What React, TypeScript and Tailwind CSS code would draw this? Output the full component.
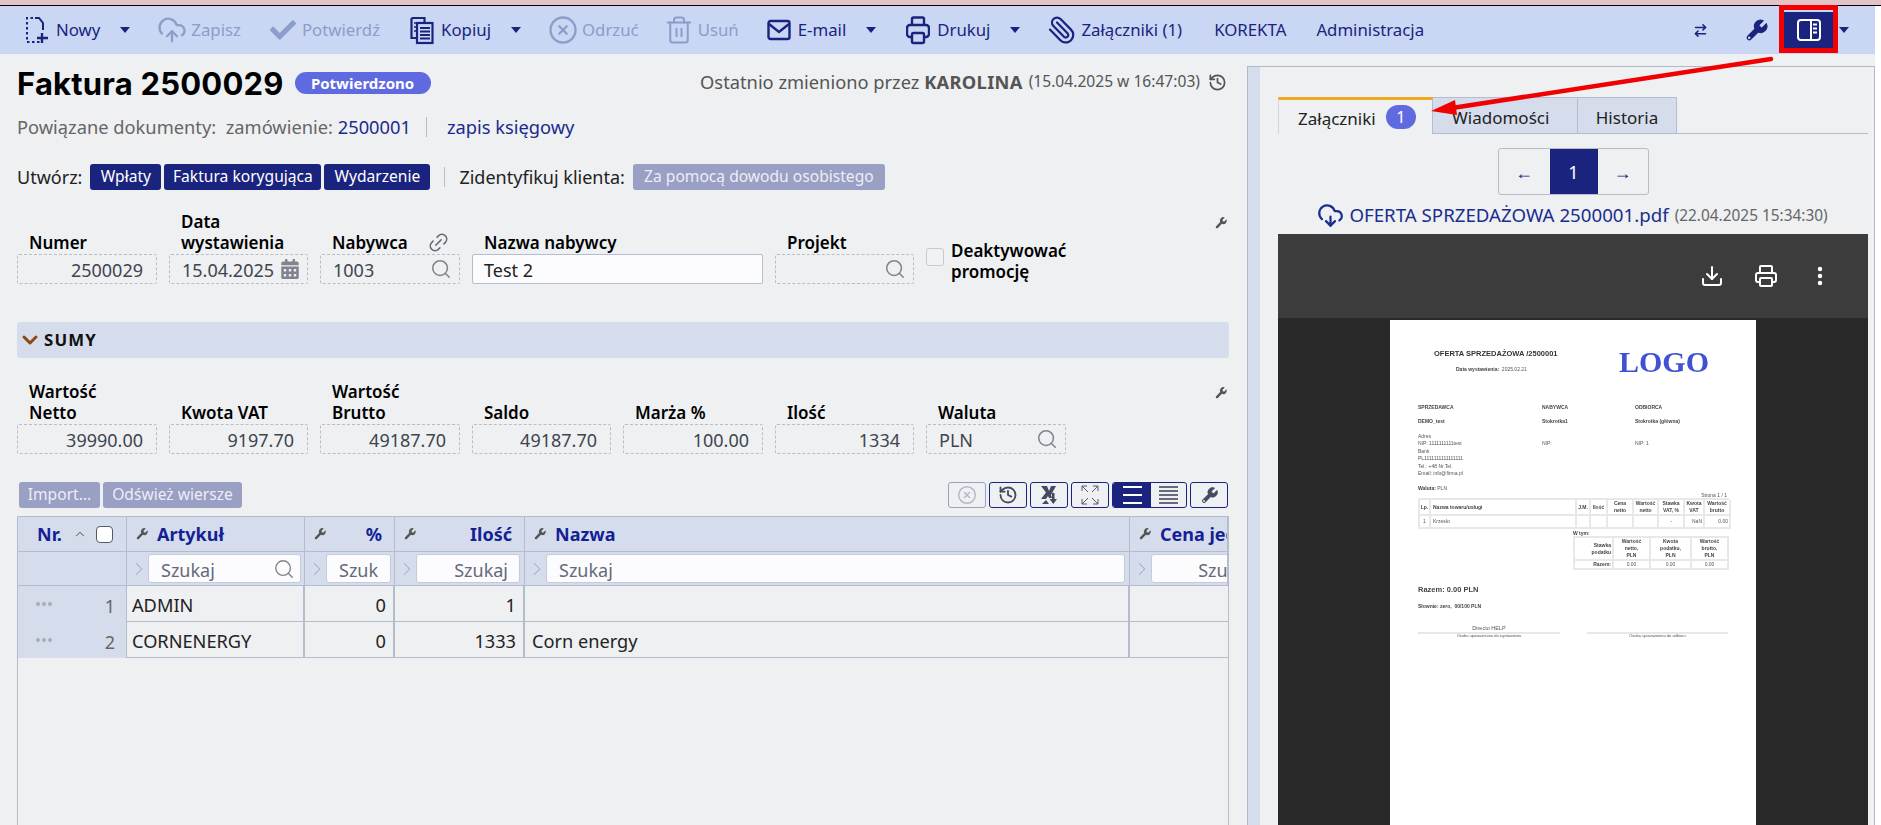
import React from "react";
import {
    CloudUpload,
    CircleX,
    Trash2,
    Paperclip,
    ArrowRightLeft,
    History,
    Search,
    Link2,
    ChevronDown,
    ChevronRight,
    ChevronUp,
    CloudDownload,
    Download,
    Printer,
    EllipsisVertical,
} from "lucide-react";
import { FaCalendarAlt, FaCheck } from "react-icons/fa";

const navy = "#1a237e";

function Caret() {
    return (
        <svg width="10" height="6" viewBox="0 0 10 6" className="ml-[20px] shrink-0">
            <polygon points="0,0 10,0 5,6" fill={navy} />
        </svg>
    );
}

function WrenchIcon({ size, className, hole }: { size: number; className?: string; hole?: string }) {
    return (
        <svg width={size} height={size} viewBox="0 0 24 24" fill="currentColor" stroke="currentColor" strokeWidth={size > 15 ? 1 : 0} className={className}>
            <path d="M14.700 6.300a1 1 0 0 0 0 1.400l1.600 1.600a1 1 0 0 0 1.400 0l3.770-3.770a6 6 0 0 1-7.940 7.940l-6.910 6.910a2.120 2.120 0 0 1-3-3l6.910-6.910a6 6 0 0 1 7.940-7.940l-3.760 3.760z" />
            {hole && <circle cx="5" cy="19" r="1.200" fill={hole} stroke="none" />}
        </svg>
    );
}

function NewIcon() {
    return (
        <svg width="24" height="28" viewBox="0 0 24 28" fill="none" stroke={navy} strokeWidth="2">
            <path d="M10 2h4l4 5v7" />
            <path d="M8 2H2v24h15" strokeDasharray="2.5 2.5" />
            <path d="M17 17v10M12 22h11" strokeWidth="2.4" />
        </svg>
    );
}

function CopyIcon() {
    return (
        <svg width="24" height="29" viewBox="0 0 24 29" fill="none" stroke={navy} strokeWidth="2.2">
            <path d="M1.500 2h13v4" />
            <path d="M1.500 2v20h5" />
            <rect x="7" y="7" width="15.500" height="20" fill="#c9d7f4" />
            <path d="M10 12h10M10 15.500h10M10 19h10M10 22.500h10" strokeWidth="1.8" />
            <path d="M4 7h3M4 11h3M4 15h3" strokeWidth="1.6" />
        </svg>
    );
}

function MailIcon() {
    return (
        <svg width="24" height="24" viewBox="0 0 24 24" fill="none" stroke={navy} strokeWidth="2.4">
            <rect x="1.500" y="3" width="21" height="18" rx="2" />
            <path d="M2 6l10 8 10-8" />
        </svg>
    );
}

function PrinterIcon() {
    return (
        <svg width="24" height="29" viewBox="0 0 24 29" fill="none" stroke={navy} strokeWidth="2.4">
            <path d="M6 9V3a1.500 1.500 0 0 1 1.500-1.500h9A1.500 1.500 0 0 1 18 3v6" />
            <path d="M6 21H4a3 3 0 0 1-3-3v-6a3 3 0 0 1 3-3h16a3 3 0 0 1 3 3v6a3 3 0 0 1-3 3h-2" />
            <rect x="6" y="17" width="12" height="10" rx="1.500" />
        </svg>
    );
}

function ToolItem({ icon, label, disabled, className }: { icon: React.ReactNode; label: string; disabled?: boolean; className?: string }) {
    return (
        <div className={`flex items-center gap-[7px] shrink-0 ${disabled ? "text-[#8d9cc9]" : "text-[#1a237e]"} ${className ?? ""}`}>
            <div className="flex w-[24px] justify-center [&>svg]:shrink-0">{icon}</div>
            <span>{label}</span>
        </div>
    );
}

function Toolbar() {
    return (
        <div className="flex h-[48px] w-[1875px] items-center bg-[#c9d7f4] pl-[25px] text-[16.800px] leading-none text-[#1a237e]">
            <div className="flex items-center gap-[30px]">
                <div className="flex items-center">
                    <ToolItem icon={<NewIcon />} label="Nowy" />
                    <Caret />
                </div>
                <ToolItem disabled icon={<CloudUpload size={30} strokeWidth={1.8} />} label="Zapisz" />
                <ToolItem disabled icon={<FaCheck size={26} />} label="Potwierdź" />
                <div className="flex items-center">
                    <ToolItem icon={<CopyIcon />} label="Kopiuj" />
                    <Caret />
                </div>
                <ToolItem disabled icon={<CircleX size={30} strokeWidth={1.8} />} label="Odrzuć" />
                <ToolItem disabled className="-ml-[2px] -mr-[2px]" icon={<Trash2 size={30} strokeWidth={1.6} />} label="Usuń" />
                <div className="flex items-center">
                    <ToolItem icon={<MailIcon />} label="E-mail" />
                    <Caret />
                </div>
                <div className="flex items-center">
                    <ToolItem icon={<PrinterIcon />} label="Drukuj" />
                    <Caret />
                </div>
                <ToolItem icon={<Paperclip size={30} strokeWidth={1.8} className="-scale-x-100" />} label="Załączniki (1)" />
                <span className="ml-[2px]">KOREKTA</span>
                <span>Administracja</span>
            </div>
            <div className="ml-auto flex items-center">
                <ArrowRightLeft size={15} strokeWidth={2.4} className="mr-[36px]" />
                <WrenchIcon size={25} hole="#c9d7f4" className="mr-[10px]" />
                <div className="h-[48px] w-[59px] -translate-y-px border-[5px] border-[#f00000] bg-[#c9d7f4]">
                    <div className="flex h-full items-center justify-center border-t-2 border-[#c9d7f4] bg-[#1a237e]">
                        <svg width="24" height="24" viewBox="0 0 24 24" fill="none" stroke="#fff" strokeWidth="2">
                            <rect x="1" y="2" width="22" height="20" rx="3" />
                            <path d="M14 2v20" />
                            <path d="M16 6.500h4M16 10.500h4M16 14.500h4" strokeWidth="2" />
                        </svg>
                    </div>
                </div>
                <svg width="10" height="6" viewBox="0 0 10 6" className="ml-[1px] mr-[26px]">
                    <polygon points="0,0 10,0 5,6" fill={navy} />
                </svg>
            </div>
        </div>
    );
}

function Field({ w, value, align, icon }: { w: string; value?: string; align?: "right"; icon?: React.ReactNode }) {
    return (
        <div
            className={`flex h-[30px] shrink-0 items-center rounded-[2px] border border-dashed border-[#b9bdc9] pt-[2px] text-[18px] leading-none text-[#3f4450] ${w} ${
                align === "right" ? "justify-end pr-[13px]" : "pl-[12px]"
            }`}
        >
            <span>{value}</span>
            {icon && <span className="-mt-[2px] ml-auto mr-[7px] flex">{icon}</span>}
        </div>
    );
}

function Labeled({ label, w, extra, children }: { label: React.ReactNode; w: string; extra?: React.ReactNode; children: React.ReactNode }) {
    return (
        <div className={`flex shrink-0 flex-col ${w}`}>
            <div className="flex items-end justify-between pl-[12px] pr-[10px] pb-[1px] text-[17px] font-semibold leading-[21px] text-black">
                <span>{label}</span>
                {extra}
            </div>
            {children}
        </div>
    );
}

const lens = <Search size={22} strokeWidth={1.7} className="text-[#80848f]" />;

function FormRow() {
    return (
        <div className="mt-[21px] flex h-[73px] items-end gap-[12px]">
            <Labeled label="Numer" w="w-[140px]">
                <Field w="w-[140px]" value="2500029" align="right" />
            </Labeled>
            <Labeled label={<>Data<br />wystawienia</>} w="w-[139px]">
                <Field w="w-[139px]" value="15.04.2025" icon={<FaCalendarAlt size={20} className="text-[#80848f]" />} />
            </Labeled>
            <Labeled label="Nabywca" w="w-[140px]" extra={<Link2 size={23} strokeWidth={1.7} className="-mb-[1px] -rotate-45 text-[#666a75]" />}>
                <Field w="w-[140px]" value="1003" icon={lens} />
            </Labeled>
            <Labeled label="Nazwa nabywcy" w="w-[291px]">
                <div className="flex h-[30px] items-center rounded-[2px] border border-[#b4bccd] bg-[#fcfcff] pl-[11px] pt-[2px] text-[18px] leading-none text-[#222]">
                    Test 2
                </div>
            </Labeled>
            <Labeled label="Projekt" w="w-[139px]">
                <Field w="w-[139px]" icon={lens} />
            </Labeled>
            <div className="mb-[2px] flex items-center gap-[7px]">
                <div className="-mt-[8px] h-[18px] w-[18px] rounded-[3px] border border-[#c8cad0] bg-[#f1f2f4]" />
                <div className="text-[17px] font-semibold leading-[21px] text-black">
                    Deaktywować<br />promocję
                </div>
            </div>
            <WrenchIcon size={14} className="mb-[54px] ml-auto mr-[1px] self-end text-[#555]" />
        </div>
    );
}

function SumsRow() {
    return (
        <div className="mt-[22px] flex h-[74px] items-end gap-[12px]">
            <Labeled label={<>Wartość<br />Netto</>} w="w-[140px]">
                <Field w="w-[140px]" value="39990.00" align="right" />
            </Labeled>
            <Labeled label="Kwota VAT" w="w-[139px]">
                <Field w="w-[139px]" value="9197.70" align="right" />
            </Labeled>
            <Labeled label={<>Wartość<br />Brutto</>} w="w-[140px]">
                <Field w="w-[140px]" value="49187.70" align="right" />
            </Labeled>
            <Labeled label="Saldo" w="w-[139px]">
                <Field w="w-[139px]" value="49187.70" align="right" />
            </Labeled>
            <Labeled label="Marża %" w="w-[140px]">
                <Field w="w-[140px]" value="100.00" align="right" />
            </Labeled>
            <Labeled label="Ilość" w="w-[139px]">
                <Field w="w-[139px]" value="1334" align="right" />
            </Labeled>
            <Labeled label="Waluta" w="w-[140px]">
                <Field w="w-[140px]" value="PLN" icon={lens} />
            </Labeled>
            <WrenchIcon size={14} className="mb-[54px] ml-auto mr-[1px] text-[#555]" />
        </div>
    );
}

function GridButton({ children, className }: { children: React.ReactNode; className?: string }) {
    return (
        <div className={`flex h-[26px] w-[38px] items-center justify-center rounded-[3px] border ${className ?? "border-[#1a237e]"}`}>
            {children}
        </div>
    );
}

function GridActions() {
    return (
        <div className="mt-[28px] flex h-[26px] items-center gap-[3px] pr-[1px]">
            <div className="ml-[2px] flex h-[26px] w-[81px] items-center justify-center rounded-[3px] bg-[#9a9fc4] text-[15.600px] text-[#eceef6]">Import...</div>
            <div className="flex h-[26px] w-[139px] items-center justify-center rounded-[3px] bg-[#9a9fc4] text-[15.600px] text-[#eceef6]">Odśwież wiersze</div>
            <div className="ml-auto flex items-center gap-[3px]">
                <GridButton className="border-[#9a9fc4]">
                    <CircleX size={20} strokeWidth={1.8} className="text-[#b4b8c8]" />
                </GridButton>
                <GridButton>
                    <History size={20} strokeWidth={2.2} className="text-[#444a60]" />
                </GridButton>
                <GridButton>
                    <svg width="20" height="20" viewBox="0 0 20 20" fill="#444a60">
                        <path d="M2 1h6l2 5 2-5h5l-5 9 1 3h-3l-1-2-2 3H2l5-6.500z" />
                        <path d="M13 8h2.500v6h2.500l-3.700 5-3.800-5h2.500z" />
                        <path d="M3 19l4-4 3 4z" />
                    </svg>
                </GridButton>
                <GridButton>
                    <svg width="18" height="20" viewBox="0 0 18 20" fill="none" stroke="#555a70" strokeWidth="1">
                        <path d="M1 1h5M1 1v5M1 1l6 6M17 1h-5M17 1v5M17 1l-6 6M1 19h5M1 19v-5M1 19l6-6M17 19h-5M17 19v-5M17 19l-6-6" />
                    </svg>
                </GridButton>
                <div className="flex h-[26px] w-[75px] overflow-hidden rounded-[3px] border border-[#1a237e]">
                    <div className="flex w-[38px] flex-col items-center justify-center gap-[6px] bg-[#1a237e]">
                        <div className="h-[2px] w-[19px] bg-white" />
                        <div className="h-[2px] w-[19px] bg-white" />
                        <div className="h-[2px] w-[19px] bg-white" />
                    </div>
                    <div className="flex flex-1 flex-col items-center justify-center gap-[2.500px]">
                        <div className="h-[1.500px] w-[19px] bg-[#666a7a]" />
                        <div className="h-[1.500px] w-[19px] bg-[#666a7a]" />
                        <div className="h-[1.500px] w-[19px] bg-[#666a7a]" />
                        <div className="h-[1.500px] w-[19px] bg-[#666a7a]" />
                        <div className="h-[1.500px] w-[19px] bg-[#666a7a]" />
                    </div>
                </div>
                <GridButton>
                    <WrenchIcon size={19} hole="#eef0f2" className="text-[#444a60]" />
                </GridButton>
            </div>
        </div>
    );
}

function HeadCell({ label, right }: { label: string; right?: boolean }) {
    return (
        <div className="flex h-[35px] items-center overflow-hidden whitespace-nowrap border-r border-b border-[#b4bccd] bg-[#d5dcec] pl-[8px] pr-[12px] last:border-r-0">
            <WrenchIcon size={14} className="shrink-0 text-[#555]" />
            <span className={`pt-[1px] text-[18px] font-bold text-[#141f96] ${right ? "ml-auto" : "ml-[8px]"}`}>{label}</span>
        </div>
    );
}

function FilterCell({ inputClass, placeholder, icon }: { inputClass: string; placeholder: string; icon?: boolean }) {
    return (
        <div className="flex h-[34px] items-center overflow-hidden border-r border-b border-[#b4bccd] bg-[#d5dcec] pl-[5px] last:border-r-0">
            <div className="flex w-[13px] shrink-0 justify-center">
                <ChevronRight size={22} strokeWidth={1.100} className="shrink-0 text-[#a4aabb]" />
            </div>
            <div className={`ml-[3px] flex h-[29px] shrink-0 items-center rounded-[3px] border border-[#c5cbdb] bg-[#fcfcff] pt-[2px] text-[18px] leading-none text-[#646a78] ${inputClass}`}>
                <span>{placeholder}</span>
                {icon && <Search size={22} strokeWidth={1.5} className="-mt-[2px] ml-auto mr-[5px] text-[#80848f]" />}
            </div>
        </div>
    );
}

function DataRow({ nr, artykul, ilosc, nazwa }: { nr: string; artykul: string; ilosc: string; nazwa: string }) {
    const cell = "flex h-[36px] items-center border-r-2 border-b border-[#b4bccd] pt-[3px] text-[18.200px] leading-none text-[#222]";
    return (
        <>
            <div className="flex h-[36px] items-center justify-between border-r border-[#b4bccd] bg-[#d5dcec] pl-[18px] pr-[11px] pt-[3px] text-[18px] leading-none text-[#666]">
                <div className="-mt-[3px] flex gap-[2px]">
                    <div className="h-[4px] w-[4px] rounded-full bg-[#a8acb8]" />
                    <div className="h-[4px] w-[4px] rounded-full bg-[#a8acb8]" />
                    <div className="h-[4px] w-[4px] rounded-full bg-[#a8acb8]" />
                </div>
                {nr}
            </div>
            <div className={`${cell} pl-[5px]`}>{artykul}</div>
            <div className={`${cell} justify-end pr-[7px]`}>0</div>
            <div className={`${cell} justify-end pr-[7px]`}>{ilosc}</div>
            <div className={`${cell} pl-[7px]`}>{nazwa}</div>
            <div className="h-[36px] border-b border-[#b4bccd]" />
        </>
    );
}

function RowsTable() {
    return (
        <div className="mt-[8px] h-[320px] w-[1212px] overflow-hidden border border-[#b4bccd]">
            <div className="grid grid-cols-[109px_178px_90px_130px_605px_98px]">
                <div className="flex h-[35px] items-center border-r border-b border-[#b4bccd] bg-[#d5dcec] pl-[19px] text-[18px] font-bold text-[#141f96]">
                    Nr.
                    <ChevronUp size={14} strokeWidth={1.800} className="ml-[11px] text-[#666]" />
                    <div className="ml-[9px] h-[17px] w-[17px] rounded-[4px] border border-[#555a6a] bg-white" />
                </div>
                <HeadCell label="Artykuł" />
                <HeadCell label="%" right />
                <HeadCell label="Ilość" right />
                <HeadCell label="Nazwa" />
                <HeadCell label="Cena jednostkowa" />

                <div className="h-[34px] border-r border-b border-[#b4bccd] bg-[#d5dcec]" />
                <FilterCell inputClass="w-[153px] pl-[12px]" placeholder="Szukaj" icon />
                <FilterCell inputClass="w-[65px] pl-[12px] overflow-hidden" placeholder="Szuk" />
                <FilterCell inputClass="w-[104px] justify-end pr-[11px]" placeholder="Szukaj" />
                <FilterCell inputClass="w-[579px] pl-[12px]" placeholder="Szukaj" />
                <FilterCell inputClass="w-[110px] justify-end pr-[8px]" placeholder="Szukaj" />

                <DataRow nr="1" artykul="ADMIN" ilosc="1" nazwa="" />
                <DataRow nr="2" artykul="CORNENERGY" ilosc="1333" nazwa="Corn energy" />
            </div>
        </div>
    );
}

function PdfPage() {
    const thin = "border-r-2 border-b-2 border-[#e8e8e8] flex items-center justify-center text-center";
    return (
        <div className="h-[560px] w-[366px] shrink-0 bg-white px-[28px] font-['Liberation_Sans',sans-serif] text-[5px] leading-[7px] text-[#555]">
            <div className="flex h-[84px] blur-[0.25px]">
                <div className="w-[201px] pl-[16px] pt-[30px]">
                    <div className="text-[7.500px] font-bold leading-[8px] text-[#333]">OFERTA SPRZEDAŻOWA /2500001</div>
                    <div className="mt-[8px] pl-[22px]">
                        <b className="text-[#444]">Data wystawienia:</b>&nbsp; 2025.02.21
                    </div>
                </div>
                <div className="pt-[27px] font-['Liberation_Serif',serif] text-[30px] font-bold leading-[30px] text-[#3f51d4]">LOGO</div>
            </div>
            <div className="blur-[0.25px]">
                <div className="grid grid-cols-[124px_93px_1fr]">
                    <div>
                        <b className="text-[#444]">SPRZEDAWCA</b>
                        <div className="mt-[7px] font-bold text-[#444]">DEMO_test</div>
                        <div className="mt-[8px]">Adres</div>
                        <div>NIP: 1111111111test</div>
                        <div className="mt-[1px]">Bank</div>
                        <div>PL1111111111111111</div>
                        <div className="mt-[1px]">Tel.: +48 Nr.Tel.</div>
                        <div>Email: info@firma.pl</div>
                    </div>
                    <div>
                        <b className="text-[#444]">NABYWCA</b>
                        <div className="mt-[7px] font-bold text-[#444]">Stokrotka1</div>
                        <div className="mt-[15px]">NIP:</div>
                    </div>
                    <div>
                        <b className="text-[#444]">ODBIORCA</b>
                        <div className="mt-[7px] font-bold text-[#444]">Stokrotka (główna)</div>
                        <div className="mt-[15px]">NIP: 1</div>
                    </div>
                </div>
                <div className="mt-[8px]">
                    <b className="text-[#444]">Waluta:</b> PLN
                </div>
                <div className="pr-[1px] text-right">Strona 1 / 1</div>
                <div className="mt-[-1px] grid w-[311px] grid-cols-[11px_146px_14px_17px_26px_25px_26px_20px_26px] border-t-2 border-l-2 border-[#e8e8e8] font-bold text-[#444]">
                    <div className={`${thin} h-[16px]`}>Lp.</div>
                    <div className={`${thin} justify-start pl-[2px]`}>Nazwa towaru/usługi</div>
                    <div className={thin}>J.M.</div>
                    <div className={thin}>Ilość</div>
                    <div className={thin}>Cena netto</div>
                    <div className={thin}>Wartość netto</div>
                    <div className={thin}>Stawka VAT, %</div>
                    <div className={thin}>Kwota VAT</div>
                    <div className={thin}>Wartość brutto</div>
                    <div className={`${thin} h-[13px] font-normal text-[#555]`}>1</div>
                    <div className={`${thin} justify-start pl-[2px] font-normal text-[#555]`}>Krzesło</div>
                    <div className={thin} />
                    <div className={thin} />
                    <div className={thin} />
                    <div className={thin} />
                    <div className={`${thin} font-normal text-[#555]`}>-</div>
                    <div className={`${thin} justify-end pr-[1px] font-normal text-[#555]`}>NaN</div>
                    <div className={`${thin} justify-end pr-[1px] font-normal text-[#555]`}>0.00</div>
                </div>
                <div className="ml-[155px] mt-[1px] font-bold text-[#444]">W tym:</div>
                <div className="ml-[155px] mt-[-1px] grid w-[156px] grid-cols-[39px_37px_41px_37px] border-t-2 border-l-2 border-[#e8e8e8] font-bold text-[#444]">
                    <div className={`${thin} h-[23px] justify-end pr-[1px] text-right`}>Stawka podatku</div>
                    <div className={thin}>Wartość<br />netto,<br />PLN</div>
                    <div className={thin}>Kwota<br />podatku,<br />PLN</div>
                    <div className={thin}>Wartość<br />brutto,<br />PLN</div>
                    <div className={`${thin} h-[9px] justify-end pr-[1px]`}>Razem:</div>
                    <div className={`${thin} font-normal text-[#555]`}>0.00</div>
                    <div className={`${thin} font-normal text-[#555]`}>0.00</div>
                    <div className={`${thin} font-normal text-[#555]`}>0.00</div>
                </div>
                <div className="mt-[16px] text-[7.500px] font-bold leading-[8px] text-[#444]">Razem: 0.00 PLN</div>
                <div className="mt-[9px] font-bold text-[#444]">Słownie: zero,&nbsp; 00/100 PLN</div>
                <div className="mt-[15px] flex justify-between">
                    <div className="w-[142px] text-center">
                        <div className="border-b-2 border-[#e8e8e8] text-[5.500px] leading-[7px]">Directo HELP</div>
                        <div className="text-[4px] leading-[4px]">Osoba upoważniona do wystawienia</div>
                    </div>
                    <div className="w-[141px] text-center">
                        <div className="h-[9px] border-b-2 border-[#e8e8e8]" />
                        <div className="text-[4px] leading-[4px]">Osoba upoważniona do odbioru</div>
                    </div>
                </div>
            </div>
        </div>
    );
}

function SidePanel() {
    return (
        <div className="mt-[12px] flex h-[759px] w-[628px] overflow-hidden border-t border-r border-l border-[#b0b8cc]">
            <div className="w-[12px] shrink-0 bg-[#d5dcec]" />
            <div className="min-w-0 flex-1 pl-[18px] pr-[6px] pt-[30px]">
                <div className="flex h-[37px] border-b border-[#b4bccd] text-[17px] leading-none">
                    <div className="flex h-[37px] w-[155px] items-center border-t-[3px] border-r border-l border-[#f0a820] border-r-[#b4bccd] border-l-[#d0d4de] bg-[#eef0f2] pl-[19px] text-[#222]">
                        <span className="pt-[2px]">Załączniki</span>
                        <span className="ml-[10px] flex h-[24px] w-[30px] items-center justify-center rounded-full bg-[#5f6ae0] text-[16px] text-white">1</span>
                    </div>
                    <div className="flex w-[145px] items-center border-t border-r border-[#b4bccd] bg-[#d5dcec] pl-[19px] pt-[3px] text-[#222]">Wiadomości</div>
                    <div className="flex w-[99px] items-center justify-center border-t border-r border-[#b4bccd] bg-[#d5dcec] pt-[3px] text-[#222]">Historia</div>
                </div>
                <div className="mt-[14px] flex justify-center">
                    <div className="flex h-[47px] w-[151px] overflow-hidden rounded-[3px] border border-[#b4bccd] text-[18px] leading-none text-[#1a237e]">
                        <div className="flex w-[51px] items-center justify-center">←</div>
                        <div className="flex w-[48px] items-center justify-center bg-[#1a237e] text-white">1</div>
                        <div className="flex flex-1 items-center justify-center">→</div>
                    </div>
                </div>
                <div className="mt-[8px] flex h-[31px] items-center justify-center pb-[6px] pr-[1px] text-[18.700px] leading-none text-[#1b2e8e]">
                    <CloudDownload size={27} strokeWidth={2} className="mr-[5px]" />
                    OFERTA SPRZEDAŻOWA 2500001.pdf
                    <span className="ml-[6px] pt-[1px] text-[15.400px] text-[#666]">(22.04.2025 15:34:30)</span>
                </div>
                <div className="h-[591px] w-[590px] bg-[#282828]">
                    <div className="flex h-[84px] items-center justify-end gap-[30px] bg-[#3c3c3c] pr-[36px] text-white">
                        <Download size={24} strokeWidth={2} />
                        <Printer size={24} strokeWidth={2} />
                        <EllipsisVertical size={24} strokeWidth={2.500} />
                    </div>
                    <div className="flex h-[507px] justify-start overflow-hidden pl-[112px] pt-[2px]">
                        <PdfPage />
                    </div>
                </div>
            </div>
        </div>
    );
}

export default function App() {
    return (
        <div className="relative h-[825px] w-[1881px] overflow-hidden bg-white font-['Noto_Sans',sans-serif]">
            <div className="h-[6px] w-full border-b border-black bg-[#e3c3c8]" />
            <Toolbar />
            <div className="flex h-[771px] w-[1875px] bg-[#eef0f2]">
                <div className="w-[1247px] shrink-0 pl-[17px] pr-[18px]">
                    <div className="mt-[12px] flex h-[34px] items-center">
                        <h1 className="pt-[1px] font-['Inter',sans-serif] text-[31px] font-bold leading-none tracking-[0.2px] text-black">Faktura 2500029</h1>
                        <span className="ml-[11px] flex h-[22px] w-[136px] items-center justify-center rounded-full bg-[#5f6ae0] text-[15px] font-bold leading-none text-white">
                            Potwierdzono
                        </span>
                        <div className="ml-auto flex -translate-y-px items-center pr-[2px] text-[18.300px] leading-none text-[#555]">
                            Ostatnio zmieniono przez&nbsp;<b className="font-bold tracking-[0.3px]">KAROLINA</b>
                            <span className="ml-[6px] text-[15.600px]">(15.04.2025 w 16:47:03)</span>
                            <History size={19} strokeWidth={2.200} className="ml-[8px]" />
                        </div>
                    </div>
                    <div className="mt-[15px] flex h-[24px] items-center text-[18.300px] leading-none text-[#666]">
                        Powiązane dokumenty:&nbsp; zamówienie:&nbsp;<span className="text-[#1b2a8a]">2500001</span>
                        <span className="mx-[15px] h-[20px] w-px bg-[#b4bccd]" />
                        <span className="ml-[5px] text-[#1b2a8a]">zapis księgowy</span>
                    </div>
                    <div className="mt-[25px] flex h-[26px] items-center text-[18px] leading-none text-[#222]">
                        <span className="mr-[8px]">Utwórz:</span>
                        <div className="flex gap-[3px] text-[15.600px] text-white">
                            <div className="flex h-[26px] w-[71px] items-center justify-center rounded-[3px] bg-[#1a237e]">Wpłaty</div>
                            <div className="flex h-[26px] w-[157px] items-center justify-center rounded-[3px] bg-[#1a237e]">Faktura korygująca</div>
                            <div className="flex h-[26px] w-[106px] items-center justify-center rounded-[3px] bg-[#1a237e]">Wydarzenie</div>
                        </div>
                        <span className="mx-[14px] h-[20px] w-px bg-[#b4bccd]" />
                        Zidentyfikuj klienta:
                        <div className="ml-[8px] flex h-[26px] w-[252px] items-center justify-center rounded-[3px] bg-[#9a9fc4] text-[15.600px] text-[#eceef6]">
                            Za pomocą dowodu osobistego
                        </div>
                    </div>
                    <FormRow />
                    <div className="mt-[38px] flex h-[36px] items-center rounded-[3px] bg-[#d5dcec] pl-[1px]">
                        <ChevronDown size={24} strokeWidth={3} className="text-[#8a4a10]" />
                        <span className="ml-[2px] text-[16.800px] font-bold tracking-[1.200px] text-[#111]">SUMY</span>
                    </div>
                    <SumsRow />
                    <GridActions />
                    <RowsTable />
                </div>
                <SidePanel />
            </div>
            {/* strzalka z adnotacji */}
            <svg className="pointer-events-none absolute left-0 top-0" width="1881" height="825">
                <line x1="1771" y1="59" x2="1452" y2="108" stroke="#f00000" strokeWidth="4.500" strokeLinecap="round" />
                <polygon points="1431,111 1455,100 1457,115" fill="#f00000" />
            </svg>
        </div>
    );
}
